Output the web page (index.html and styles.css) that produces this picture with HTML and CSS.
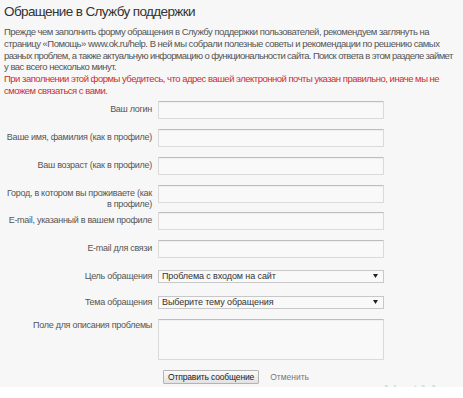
FILE: index.html
```html
<!DOCTYPE html>
<html lang="ru">
<head>
<meta charset="utf-8">
<title>Обращение в Службу поддержки</title>
<link rel="stylesheet" href="styles.css">
</head>
<body>
<div class="page">
  <h1 class="title">Обращение в Службу поддержки</h1>
  <p class="intro">Прежде чем заполнить форму обращения в Службу поддержки пользователей, рекомендуем заглянуть на<br>страницу «Помощь» www.ok.ru/help. В ней мы собрали полезные советы и рекомендации по решению самых<br><span class="tight">разных проблем, а также актуальную информацию о функциональности сайта. Поиск ответа в этом разделе займет</span><br>у вас всего несколько минут.</p>
  <p class="warn">При заполнении этой формы убедитесь, что адрес вашей электронной почты указан правильно, иначе мы не<br>сможем связаться с вами.</p>
  <form class="form">
    <div class="row"><label class="label">Ваш логин</label><input class="field" type="text"></div>
    <div class="row"><label class="label">Ваше имя, фамилия (как в профиле)</label><input class="field" type="text"></div>
    <div class="row"><label class="label">Ваш возраст (как в профиле)</label><input class="field" type="text"></div>
    <div class="row row-tight"><label class="label">Город, в котором вы проживаете (как<br>в профиле)</label><input class="field" type="text"></div>
    <div class="row"><label class="label">E-mail, указанный в вашем профиле</label><input class="field" type="text"></div>
    <div class="row row-wide"><label class="label">E-mail для связи</label><input class="field" type="text"></div>
    <div class="row row-select"><label class="label label-select">Цель обращения</label><div class="select"><span>Проблема с входом на сайт</span><svg class="arrow" width="5" height="4" viewBox="0 0 5 4"><path d="M0 0H5L2.5 4Z" fill="#222"/></svg></div></div>
    <div class="row row-select2"><label class="label label-select">Тема обращения</label><div class="select"><span>Выберите тему обращения</span><svg class="arrow" width="5" height="4" viewBox="0 0 5 4"><path d="M0 0H5L2.5 4Z" fill="#222"/></svg></div></div>
    <div class="row row-area"><label class="label label-area">Поле для описания проблемы</label><textarea class="area"></textarea></div>
    <div class="actions"><button class="btn" type="button">Отправить сообщение</button><a class="cancel">Отменить</a></div>
  </form>
  <div class="watermark">NetM</div>
</div>
</body>
</html>
```
FILE: styles.css
```css
html, body {
  margin: 0;
  padding: 0;
  background: #ffffff;
  font-family: "Liberation Sans", Arial, sans-serif;
  overflow: hidden;
}
.page {
  position: relative;
  overflow: hidden;
  background: #f7f7f7;
  height: 387px;
  box-sizing: border-box;
  padding: 3px 4px 0;
}
.title {
  margin: 0 0 5px;
  font-size: 13.5px;
  line-height: 18px;
  letter-spacing: -0.62px;
  font-weight: normal;
  color: #333;
}
.intro, .warn {
  margin: 0;
  font-size: 9.5px;
  line-height: 11.8px;
  letter-spacing: -0.5px;
  color: #555;
  white-space: nowrap;
}
.tight {
  letter-spacing: -0.62px;
}
.warn {
  color: #cc2e2e;
}
.form {
  margin-top: 4px;
}
.row {
  display: flex;
  align-items: flex-start;
  gap: 6px;
  height: 18px;
  margin-bottom: 10px;
}
.row-tight { margin-bottom: 9px; }
.row-wide { margin-bottom: 12px; }
.row-select { height: 13px; margin-bottom: 13px; }
.row-select2 { height: 13px; margin-bottom: 10px; }
.row-area { height: 41px; margin-bottom: 10px; }
.label {
  flex: 0 0 148px;
  text-align: right;
  white-space: nowrap;
  font-size: 9px;
  line-height: 10.5px;
  letter-spacing: -0.28px;
  padding-top: 3.5px;
  color: #555;
}
.label-select { padding-top: 1.5px; }
.label-area { padding-top: 1.5px; }
.field, .area {
  width: 226px;
  height: 18px;
  box-sizing: border-box;
  margin: 0;
  background: #f9f9f9;
  border: 1px solid #dadada;
  border-top-color: #bdbdbd;
  box-shadow: inset 0 1px 1px rgba(0,0,0,0.04);
  border-radius: 1px;
}
.area {
  height: 41px;
  resize: none;
}
.select {
  width: 226px;
  height: 13px;
  box-sizing: border-box;
  border: 1px solid #c8c8c8;
  background: #f9f9f9;
  display: flex;
  align-items: center;
  justify-content: space-between;
  padding: 0 5px 0 3px;
  font-size: 9px;
  letter-spacing: -0.1px;
  color: #333;
}
.arrow { display: block; }
.actions {
  display: flex;
  align-items: center;
  gap: 11px;
  padding-left: 159px;
}
.btn {
  height: 14px;
  box-sizing: border-box;
  padding: 0 4px;
  font-family: "Liberation Sans", Arial, sans-serif;
  font-size: 8.5px;
  letter-spacing: -0.15px;
  line-height: 12px;
  color: #222;
  border: 1px solid #b4b4b4;
  border-radius: 1px;
  background: linear-gradient(#fbfbfb, #e2e2e2);
}
.cancel {
  font-size: 8.5px;
  color: #777;
}
.watermark {
  position: absolute;
  left: 383px;
  top: 382px;
  font-size: 20px;
  line-height: 20px;
  letter-spacing: 2px;
  color: #cfe2e6;
  white-space: nowrap;
}
```
